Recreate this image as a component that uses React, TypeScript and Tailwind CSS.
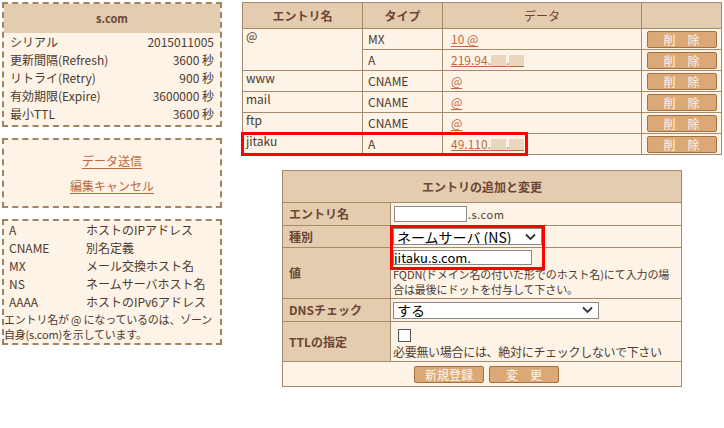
import type { ReactNode } from 'react';

const FONT = { fontFamily: '"Noto Sans CJK JP", "Liberation Sans", sans-serif' };

const soa = [
  { label: 'シリアル', value: '2015011005' },
  { label: '更新間隔(Refresh)', value: '3600 秒' },
  { label: 'リトライ(Retry)', value: '900 秒' },
  { label: '有効期限(Expire)', value: '3600000 秒' },
  { label: '最小TTL', value: '3600 秒' },
];

const legend = [
  { type: 'A', desc: 'ホストのIPアドレス' },
  { type: 'CNAME', desc: '別名定義' },
  { type: 'MX', desc: 'メール交換ホスト名' },
  { type: 'NS', desc: 'ネームサーバホスト名' },
  { type: 'AAAA', desc: 'ホストのIPv6アドレス' },
];

// 隠された IP のオクテット
function Mask() {
  return <span className="inline-block h-[11px] w-[15px] bg-[#e9d6bc] align-[-1px]" />;
}

function MaskedIp({ prefix }: { prefix: string }) {
  return (
    <a href="#" className="inline-block border-b border-[#c0683c] leading-[13px] text-[#c0683c]">
      {prefix}
      <Mask />.<Mask />
    </a>
  );
}

function DataLink({ children }: { children: ReactNode }) {
  return (
    <a href="#" className="text-[#c0683c] underline underline-offset-2">
      {children}
    </a>
  );
}

function DeleteButton() {
  return (
    <button
      type="button"
      className="mx-auto block h-[17px] w-[70px] rounded-[2px] border border-[#a8703e] bg-[#dba978] text-[12px] leading-[15px] text-[#fff8ee]"
    >
      削　除
    </button>
  );
}

function Chevron() {
  return (
    <svg
      className="pointer-events-none absolute right-[6px] top-1/2 h-[8px] w-[11px] -translate-y-1/2"
      viewBox="0 0 11 8"
      fill="none"
      stroke="#333"
      strokeWidth={1.8}
    >
      <path d="M1 1.5 L5.5 6 L10 1.5" />
    </svg>
  );
}

const records = [
  { name: '@', type: 'MX', data: <DataLink>10 @</DataLink>, rowSpan: 2 },
  { name: null, type: 'A', data: <MaskedIp prefix="219.94." /> },
  { name: 'www', type: 'CNAME', data: <DataLink>@</DataLink> },
  { name: 'mail', type: 'CNAME', data: <DataLink>@</DataLink> },
  { name: 'ftp', type: 'CNAME', data: <DataLink>@</DataLink> },
  { name: 'jitaku', type: 'A', data: <MaskedIp prefix="49.110." /> },
];

export default function App() {
  const cell = 'border border-[#a68a6c]';
  const head = `${cell} bg-[#e4ccae] font-bold text-[#6b4636]`;
  const label = `${cell} bg-[#e4ccae] px-[6px] text-left font-bold text-[#6b4636]`;

  return (
    <div style={FONT} className="flex gap-[20px] bg-white p-[2px] text-[12px] text-[#4d3a30]">
      {/* 左カラム */}
      <div className="flex w-[220px] shrink-0 flex-col gap-[11px]">
        <div className="border-2 border-dashed border-[#a08462] bg-[#fdf3e6] pb-[2px]">
          <div className="flex h-[29px] items-center justify-center bg-[#e4ccae] text-[11px] font-bold text-[#6b4636]">
            s.com
          </div>
          {soa.map((r) => (
            <div key={r.label} className="flex h-[18px] items-center justify-between px-[6px]">
              <span>{r.label}</span>
              <span>{r.value}</span>
            </div>
          ))}
        </div>

        <div className="flex h-[70px] flex-col items-center justify-center gap-[7px] border-2 border-dashed border-[#a08462] bg-[#fdf3e6]">
          <a href="#" className="text-[#c0683c] underline underline-offset-2">データ送信</a>
          <a href="#" className="text-[#c0683c] underline underline-offset-2">編集キャンセル</a>
        </div>

        <div className="border-2 border-dashed border-[#a08462] bg-[#fdf3e6] pb-[1px]">
          {legend.map((l) => (
            <div key={l.type} className="flex h-[18px] items-center pl-[5px]">
              <span className="w-[77px]">{l.type}</span>
              <span>{l.desc}</span>
            </div>
          ))}
          <p className="mt-[1px] whitespace-nowrap text-[11px] leading-[15px] tracking-[-0.2px]">
            エントリ名が @ になっているのは、ゾーン
            <br />
            自身(s.com)を示しています。
          </p>
        </div>
      </div>

      {/* 右カラム */}
      <div className="flex w-[480px] flex-col items-center">
        <div className="relative w-full">
          <table className="w-full border-collapse border border-[#a68a6c] bg-[#fdf3e6]">
            <thead>
              <tr className="h-[26px]">
                <th className={`${head} w-[120px]`}>エントリ名</th>
                <th className={`${head} w-[80px]`}>タイプ</th>
                <th className={`${head} w-[199px] font-normal`}>データ</th>
                <th className={head}></th>
              </tr>
            </thead>
            <tbody>
              {records.map((r, i) => (
                <tr key={i} className="h-[21px]">
                  {r.name !== null && (
                    <td rowSpan={r.rowSpan} className={`${cell} px-[3px] align-top leading-[14px]`}>
                      {r.name}
                    </td>
                  )}
                  <td className={`${cell} px-[5px]`}>{r.type}</td>
                  <td className={`${cell} px-[8px]`}>{r.data}</td>
                  <td className={cell}>
                    <DeleteButton />
                  </td>
                </tr>
              ))}
            </tbody>
          </table>
          <div className="pointer-events-none absolute left-[-1px] top-[130px] h-[24px] w-[287px] border-[3px] border-[#ff0000]" />
        </div>

        <div className="relative mt-[15px] w-[400px]">
          <table className="w-full border-collapse border border-[#a68a6c] bg-[#fdf3e6]">
            <tbody>
              <tr className="h-[32px]">
                <th colSpan={2} className={head}>エントリの追加と変更</th>
              </tr>
              <tr className="h-[23px]">
                <th className={`${label} w-[108px]`}>エントリ名</th>
                <td className={`${cell} px-[3px]`}>
                  <span className="flex items-center">
                    <input className="h-[16px] w-[73px] border border-[#8a8a8a] bg-white" />
                    <span className="ml-[1px] text-[11px] tracking-[0.5px]">.s.com</span>
                  </span>
                </td>
              </tr>
              <tr className="h-[22px]">
                <th className={label}>種別</th>
                <td className={`${cell} px-[2px]`}>
                  <div className="relative h-[17px] w-[149px]">
                    <select className="h-full w-full appearance-none border border-[#8a8a8a] bg-white pl-[3px] text-[14px] leading-[14px] text-black">
                      <option>ネームサーバ (NS)</option>
                    </select>
                    <Chevron />
                  </div>
                </td>
              </tr>
              <tr className="h-[50px]">
                <th className={label}>値</th>
                <td className={`${cell} px-[2px] pt-[2px] pb-[1px] align-top`}>
                  <input
                    defaultValue="jitaku.s.com."
                    className="block h-[15px] w-[139px] border border-[#8a8a8a] bg-white text-[13px] leading-[13px] text-black"
                  />
                  <p className="mt-[2px] whitespace-nowrap text-[11px] leading-[15px] tracking-[-0.1px]">
                    FQDN(ドメイン名の付いた形でのホスト名)にて入力の場
                    <br />
                    合は最後にドットを付与して下さい。
                  </p>
                </td>
              </tr>
              <tr className="h-[23px]">
                <th className={label}>DNSチェック</th>
                <td className={`${cell} px-[2px]`}>
                  <div className="relative h-[17px] w-[206px]">
                    <select className="h-full w-full appearance-none border border-[#8a8a8a] bg-white pl-[3px] text-[14px] leading-[14px] text-black">
                      <option>する</option>
                    </select>
                    <Chevron />
                  </div>
                </td>
              </tr>
              <tr className="h-[40px]">
                <th className={label}>TTLの指定</th>
                <td className={`${cell} px-[2px] pt-[5px]`}>
                  <span className="ml-[5px] block h-[13px] w-[13px] border border-[#555] bg-white" />
                  <p className="mt-[3px] text-[12px] leading-[14px] tracking-[-0.3px]">
                    必要無い場合には、絶対にチェックしないで下さい
                  </p>
                </td>
              </tr>
              <tr className="h-[25px]">
                <td colSpan={2} className={cell}>
                  <div className="flex justify-center gap-[5px] pl-[9px]">
                    <button
                      type="button"
                      className="h-[17px] w-[70px] rounded-[2px] border border-[#a8703e] bg-[#dba978] text-[12px] leading-[15px] text-[#fff8ee]"
                    >
                      新規登録
                    </button>
                    <button
                      type="button"
                      className="h-[17px] w-[70px] rounded-[2px] border border-[#a8703e] bg-[#dba978] text-[12px] leading-[15px] text-[#fff8ee]"
                    >
                      変　更
                    </button>
                  </div>
                </td>
              </tr>
            </tbody>
          </table>
          <div className="pointer-events-none absolute left-[108px] top-[55px] h-[45px] w-[155px] border-[3px] border-[#ff0000]" />
        </div>
      </div>
    </div>
  );
}
